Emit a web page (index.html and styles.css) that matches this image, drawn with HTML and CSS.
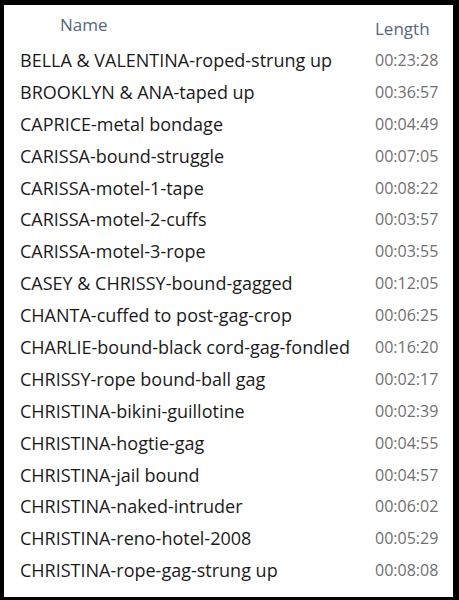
FILE: index.html
```html
<!DOCTYPE html>
<html lang="en">
<head>
    <meta charset="UTF-8">
    <meta name="viewport" content="width=device-width, initial-scale=1.0">
    <title>File list</title>
    <link rel="stylesheet" href="styles.css">
</head>
<body>

<div class="panel">
    <div class="header">
        <span class="col-name">Name</span>
        <span class="col-length">Length</span>
    </div>

    <ul class="files">
        <li><span class="name">BELLA &amp; VALENTINA-roped-strung up</span><span class="length">00:23:28</span></li>
        <li><span class="name">BROOKLYN &amp; ANA-taped up</span><span class="length">00:36:57</span></li>
        <li><span class="name">CAPRICE-metal bondage</span><span class="length">00:04:49</span></li>
        <li><span class="name">CARISSA-bound-struggle</span><span class="length">00:07:05</span></li>
        <li><span class="name">CARISSA-motel-1-tape</span><span class="length">00:08:22</span></li>
        <li><span class="name">CARISSA-motel-2-cuffs</span><span class="length">00:03:57</span></li>
        <li><span class="name">CARISSA-motel-3-rope</span><span class="length">00:03:55</span></li>
        <li><span class="name">CASEY &amp; CHRISSY-bound-gagged</span><span class="length">00:12:05</span></li>
        <li><span class="name">CHANTA-cuffed to post-gag-crop</span><span class="length">00:06:25</span></li>
        <li><span class="name">CHARLIE-bound-black cord-gag-fondled</span><span class="length">00:16:20</span></li>
        <li><span class="name">CHRISSY-rope bound-ball gag</span><span class="length">00:02:17</span></li>
        <li><span class="name">CHRISTINA-bikini-guillotine</span><span class="length">00:02:39</span></li>
        <li><span class="name">CHRISTINA-hogtie-gag</span><span class="length">00:04:55</span></li>
        <li><span class="name">CHRISTINA-jail bound</span><span class="length">00:04:57</span></li>
        <li><span class="name">CHRISTINA-naked-intruder</span><span class="length">00:06:02</span></li>
        <li><span class="name">CHRISTINA-reno-hotel-2008</span><span class="length">00:05:29</span></li>
        <li><span class="name">CHRISTINA-rope-gag-strung up</span><span class="length">00:08:08</span></li>
    </ul>
</div>

</body>
</html>
```

FILE: styles.css
```css
html, body {
    height: 100%;
}

body {
    margin: 0;
    background-color: #000;
    font-family: "Open Sans", "Noto Sans", Arial, sans-serif;
    font-size: 17px;
    box-sizing: border-box;
    padding: 5px 6px 3px 4px;
}

.panel {
    height: 100%;
    background-color: #fff;
    padding: 0 14px 0 16px;
    box-sizing: border-box;
}

.header {
    display: flex;
    height: 39px;
    color: #56667c;
}

.header .col-name {
    width: 355px;
    padding-left: 40px;
    padding-top: 8px;
    box-sizing: border-box;
}

.header .col-length {
    padding-top: 12px;
}

.files {
    list-style: none;
    margin: 0;
    padding: 0;
}

.files li {
    display: flex;
    align-items: center;
    height: 31.9px;
}

.name {
    width: 355px;
    font-size: 18px;
    color: #1a1a1a;
    white-space: nowrap;
}

.length {
    font-size: 16px;
    color: #707070;
}
```
